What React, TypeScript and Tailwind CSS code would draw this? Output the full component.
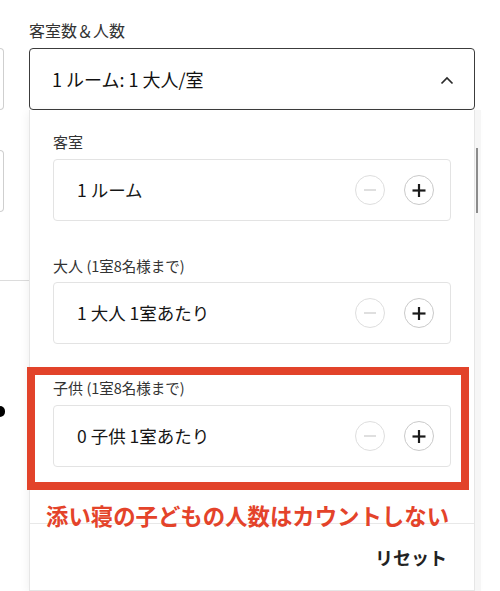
import React from "react";

const font = '"Noto Sans CJK JP", "Noto Sans", sans-serif';

function Counter() {
  return (
    <div className="flex items-center gap-[19px]">
      <div className="w-[30px] h-[30px] rounded-full border border-[#dedede] flex items-center justify-center">
        <svg width="14" height="14" viewBox="0 0 14 14">
          <line x1="1" y1="7" x2="13" y2="7" stroke="#d4d4d4" strokeWidth="1.5" />
        </svg>
      </div>
      <div className="w-[30px] h-[30px] rounded-full border border-[#cacaca] flex items-center justify-center">
        <svg width="14" height="14" viewBox="0 0 14 14">
          <line x1="0.5" y1="7.5" x2="13.5" y2="7.5" stroke="#1a1a1a" strokeWidth="2.2" />
          <line x1="7" y1="1" x2="7" y2="14" stroke="#1a1a1a" strokeWidth="2.2" />
        </svg>
      </div>
    </div>
  );
}

function Card({ text }: { text: string }) {
  return (
    <div className="h-[62px] border border-[#e3e3e3] rounded-[4px] flex items-center justify-between pl-[23px] pr-[16px] bg-white">
      <span className="text-[17.5px] text-[#161616] leading-[24px]">{text}</span>
      <Counter />
    </div>
  );
}

export default function App() {
  return (
    <div
      className="w-[500px] h-[591px] bg-white relative overflow-hidden flex"
      style={{ fontFamily: font }}
    >
      {/* left background fragments */}
      <div className="w-[29px] shrink-0 flex flex-col">
        <div className="mt-[48px] w-[4px] h-[62px] border-y border-r border-[#cfcfcf] rounded-r-[4px]" />
        <div className="mt-[40px] w-[4px] h-[62px] border-y border-r border-[#cfcfcf] rounded-r-[4px]" />
        <div className="mt-[68px] w-full border-t border-[#dcdcdc]" />
        <div className="mt-[125px] w-[5px] h-[11px] rounded-r-full bg-black" />
      </div>

      {/* main column */}
      <div className="w-[446px] shrink-0 flex flex-col pt-[20px]">
        <div className="h-[20px] leading-[20px] text-[16px] text-[#333] mb-[8px]">客室数＆人数</div>
        <div className="h-[62px] border border-[#3c3c3c] rounded-[4px] flex items-center justify-between pl-[22px] pr-[20px]">
          <span className="text-[18px] text-[#111] leading-[24px]">1 ルーム: 1 大人/室</span>
          <svg width="14" height="9" viewBox="0 0 14 9" className="mt-[3px]">
            <polyline points="1.5,7.5 7,2 12.5,7.5" fill="none" stroke="#2a2a2a" strokeWidth="1.7" />
          </svg>
        </div>
        <div className="flex-1 flex flex-col border-x border-b border-[#e6e6e6] bg-white shadow-[0_2px_10px_rgba(0,0,0,0.07)]">
          <div className="px-[23px] pt-[22px] pb-[56px] flex flex-col">
            <div className="h-[20px] leading-[20px] text-[15px] text-[#333]">客室</div>
            <div className="mt-[7px]">
              <Card text="1 ルーム" />
            </div>
            <div className="mt-[35px] h-[20px] leading-[20px] text-[15px] text-[#333]">
              大人 <span className="text-[14.5px]">(1室8名様まで)</span>
            </div>
            <div className="mt-[6px]">
              <Card text="1 大人 1室あたり" />
            </div>
            <div className="mt-[34px] h-[20px] leading-[20px] text-[15px] text-[#333]">
              子供 <span className="text-[14.5px]">(1室8名様まで)</span>
            </div>
            <div className="mt-[7px]">
              <Card text="0 子供 1室あたり" />
            </div>
          </div>
          <div className="mt-auto h-[67px] border-t border-[#e8e8e8] flex items-center justify-end pr-[27px]">
            <span className="text-[18px] font-bold text-[#222] leading-[24px]">リセット</span>
          </div>
        </div>
      </div>

      {/* scrollbar */}
      <div className="flex-1 flex flex-col pt-[110px]">
        <div className="w-[6px] flex-1 bg-[#f6f6f6] pt-[38px]">
          <div className="ml-[1px] w-[2px] h-[65px] bg-[#8c8c8c]" />
        </div>
      </div>

      {/* annotation overlays */}
      <div className="absolute left-[27px] top-[367px] w-[442px] h-[123px] border-[8px] border-[#e2432a]" />
      <div className="absolute left-[46px] top-[502px] text-[22.4px] font-bold leading-[26px] text-[#e4432a] whitespace-nowrap">
        添い寝の子どもの人数はカウントしない
      </div>
    </div>
  );
}
